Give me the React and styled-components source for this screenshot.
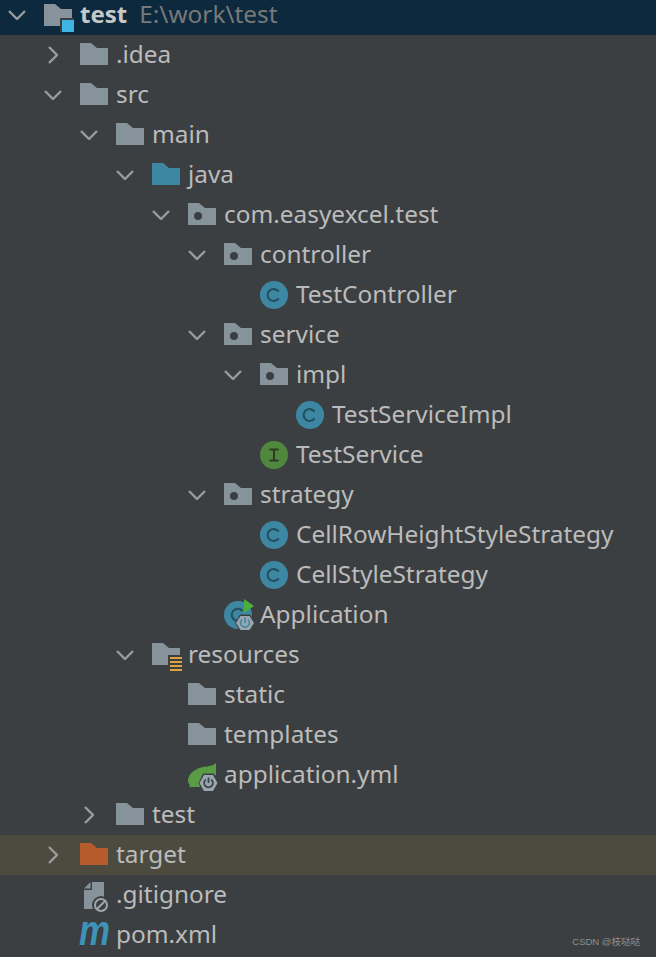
import React from "react";
import styled, { createGlobalStyle } from "styled-components";

const GlobalStyle = createGlobalStyle`
  html, body { margin: 0; padding: 0; background: #3c3f41; }
`;

const Tree = styled.div`
  position: relative;
  width: 656px;
  height: 957px;
  overflow: hidden;
  background: #3c3f41;
  color: #bbbbbb;
  font-family: "Noto Sans", "Open Sans", sans-serif;
  font-size: 24.4px;
`;

const Row = styled.div`
  display: flex;
  align-items: center;
  height: 40px;
  padding-left: ${(p) => p.$depth * 36}px;
  background: ${(p) => (p.$ignored ? "#4d4a40" : "transparent")};
  white-space: nowrap;
`;

const RootRow = styled(Row)`
  height: 29px;
  padding-bottom: 6px;
  background: #0d293e;
`;

const Arrow = styled.span`
  display: flex;
  align-items: center;
  justify-content: center;
  width: 34px;
  height: 28px;
  margin-right: 10px;
  flex: none;
`;

const IconBox = styled.span`
  display: flex;
  width: 28px;
  height: 28px;
  margin-right: 9px;
  flex: none;
  align-items: center;
  justify-content: flex-start;

  svg { display: block; overflow: visible; flex: none; }
`;

const FolderSvg = styled.svg`
  margin-bottom: 2px;
`;

const Label = styled.span`
  line-height: 24px;
  margin-top: -2px;
  margin-left: -1px;
`;

const RootName = styled(Label)`
  font-weight: 700;
  font-size: 24px;
  color: #c6c8ca;
`;

const RootPath = styled(Label)`
  margin-left: 12px;
  color: #787878;
`;

const Watermark = styled.div`
  position: absolute;
  right: 16px;
  bottom: 9px;
  font-family: "Liberation Sans", "Noto Sans CJK SC", sans-serif;
  font-size: 9.5px;
  color: #8d8f90;
`;

const FOLDER = "M0 0H11L17 5H28V22H0Z";
const BG = "#3c3f41";
const GREY = "#87939a";
const HEX_LIGHT = "#9aa7b0";

function Chevron({ open }) {
  return open ? (
    <svg width="18" height="10" viewBox="0 0 18 10">
      <path d="M1 1L9 9L17 1" fill="none" stroke="#9a9b9c" strokeWidth="2.4" />
    </svg>
  ) : (
    <svg width="10" height="18" viewBox="0 0 10 18">
      <path d="M1 1L9 9L1 17" fill="none" stroke="#9a9b9c" strokeWidth="2.4" />
    </svg>
  );
}

function Folder({ color = GREY }) {
  return (
    <FolderSvg width="28" height="22" viewBox="0 0 28 22">
      <path d={FOLDER} fill={color} />
    </FolderSvg>
  );
}

function PackageIcon() {
  return (
    <FolderSvg width="28" height="22" viewBox="0 0 28 22">
      <path d={FOLDER} fill={GREY} />
      <circle cx="10" cy="13" r="4" fill={BG} />
    </FolderSvg>
  );
}

function ModuleIcon() {
  return (
    <svg width="30" height="28" viewBox="0 0 30 28" style={{ marginTop: 6 }}>
      <path d={FOLDER} fill={GREY} />
      <rect x="16" y="14" width="14" height="14" fill={BG} />
      <rect x="18" y="16" width="12" height="12" fill="#3eb6e4" />
    </svg>
  );
}

function ResourcesIcon() {
  return (
    <svg width="30" height="24" viewBox="0 0 30 24">
      <path d={FOLDER} fill={GREY} />
      <rect x="16" y="12" width="14" height="16" fill={BG} />
      <g fill="#dfa33f">
        <rect x="18" y="14" width="12" height="2" />
        <rect x="18" y="18" width="12" height="2" />
        <rect x="18" y="22" width="12" height="2" />
        <rect x="18" y="26" width="12" height="2" />
      </g>
    </svg>
  );
}

function ClassIcon() {
  return (
    <svg width="28" height="28" viewBox="0 0 28 28">
      <circle cx="14" cy="14" r="14" fill="#3e87a3" />
      <path d="M18.6 10.6A6 6 0 1 0 18.6 17.4" fill="none" stroke="#22505f" strokeWidth="2.2" />
    </svg>
  );
}

function InterfaceIcon() {
  return (
    <svg width="28" height="28" viewBox="0 0 28 28">
      <circle cx="14" cy="14" r="14" fill="#4f873c" />
      <path d="M9.5 8.5H18.5M14 8.5V19.5M9.5 19.5H18.5" fill="none" stroke="#2e3a26" strokeWidth="2" />
    </svg>
  );
}

function BootIcon() {
  return (
    <svg width="32" height="32" viewBox="0 0 32 32">
      <circle cx="14" cy="16" r="14" fill="#3e87a3" />
      <path d="M18.4 12A6 6 0 1 0 16 21.5" fill="none" stroke="#22505f" strokeWidth="2.2" />
      <path d="M20 0L30 7L20 14Z" fill="#4dae3c" />
      <path d="M16 15.5H26L31 24L26 32.5H16L11 24Z" fill={BG} />
      <path d="M16.5 17H25.5L30 24L25.5 31H16.5L12 24Z" fill={HEX_LIGHT} />
      <path d="M18 20.5A4.4 4.4 0 1 0 24 20.5" fill="none" stroke="#3e87a3" strokeWidth="1.6" />
      <path d="M21 18.5V24" stroke="#3e87a3" strokeWidth="1.6" />
    </svg>
  );
}

function YamlIcon() {
  return (
    <svg width="30" height="24" viewBox="0 0 30 24">
      <path d="M28 0C25 4 15 3 9 6C3 9 0 13 0 18C0 20 1 21 2 22L1 24H12L28 12Z" fill="#5a9c43" />
      <path d="M15 10.5H26L30.5 20L26 29.5H15L10.5 20Z" fill={BG} />
      <path d="M16 12H25L29.5 20L25 28H16L11.5 20Z" fill={HEX_LIGHT} />
      <path d="M17.8 16.5A4.4 4.4 0 1 0 23.2 16.5" fill="none" stroke="#3c4446" strokeWidth="1.8" />
      <path d="M20.5 14.5V20" stroke="#3c4446" strokeWidth="1.8" />
    </svg>
  );
}

function IgnoredFileIcon() {
  return (
    <svg width="28" height="28" viewBox="0 0 28 28">
      <path d="M12 1H24V28H4V9H12Z" fill={GREY} />
      <path d="M10.5 1V7.5H4Z" fill={GREY} />
      <circle cx="21" cy="24" r="9" fill={BG} />
      <circle cx="21" cy="24" r="6" fill="none" stroke={HEX_LIGHT} strokeWidth="2" />
      <path d="M17 28L25 20" stroke={HEX_LIGHT} strokeWidth="2" />
    </svg>
  );
}

function MavenIcon() {
  return (
    <svg width="32" height="28" viewBox="0 0 32 28">
      <text
        x="-1"
        y="24"
        fontFamily="Liberation Sans, sans-serif"
        fontWeight="700"
        fontStyle="italic"
        fontSize="42"
        textLength="31"
        lengthAdjust="spacingAndGlyphs"
        fill="#3d93b8"
      >
        m
      </text>
    </svg>
  );
}

const rows = [
  { depth: 1, arrow: "right", icon: <Folder />, name: ".idea" },
  { depth: 1, arrow: "down", icon: <Folder />, name: "src" },
  { depth: 2, arrow: "down", icon: <Folder />, name: "main" },
  { depth: 3, arrow: "down", icon: <Folder color="#3e87a3" />, name: "java" },
  { depth: 4, arrow: "down", icon: <PackageIcon />, name: "com.easyexcel.test" },
  { depth: 5, arrow: "down", icon: <PackageIcon />, name: "controller" },
  { depth: 6, icon: <ClassIcon />, name: "TestController" },
  { depth: 5, arrow: "down", icon: <PackageIcon />, name: "service" },
  { depth: 6, arrow: "down", icon: <PackageIcon />, name: "impl" },
  { depth: 7, icon: <ClassIcon />, name: "TestServiceImpl" },
  { depth: 6, icon: <InterfaceIcon />, name: "TestService" },
  { depth: 5, arrow: "down", icon: <PackageIcon />, name: "strategy" },
  { depth: 6, icon: <ClassIcon />, name: "CellRowHeightStyleStrategy" },
  { depth: 6, icon: <ClassIcon />, name: "CellStyleStrategy" },
  { depth: 5, icon: <BootIcon />, name: "Application" },
  { depth: 3, arrow: "down", icon: <ResourcesIcon />, name: "resources" },
  { depth: 4, icon: <Folder />, name: "static" },
  { depth: 4, icon: <Folder />, name: "templates" },
  { depth: 4, icon: <YamlIcon />, name: "application.yml" },
  { depth: 2, arrow: "right", icon: <Folder />, name: "test" },
  { depth: 1, arrow: "right", icon: <Folder color="#b65b2c" />, name: "target", ignored: true },
  { depth: 1, icon: <IgnoredFileIcon />, name: ".gitignore" },
  { depth: 1, icon: <MavenIcon />, name: "pom.xml" },
];

export default function App() {
  return (
    <Tree>
      <GlobalStyle />
      <RootRow $depth={0}>
        <Arrow>
          <Chevron open />
        </Arrow>
        <IconBox>
          <ModuleIcon />
        </IconBox>
        <RootName>test</RootName>
        <RootPath>E:\work\test</RootPath>
      </RootRow>
      {rows.map((r) => (
        <Row key={r.name + r.depth} $depth={r.depth} $ignored={r.ignored}>
          <Arrow>{r.arrow && <Chevron open={r.arrow === "down"} />}</Arrow>
          <IconBox>{r.icon}</IconBox>
          <Label>{r.name}</Label>
        </Row>
      ))}
      <Watermark>CSDN @枝哒哒</Watermark>
    </Tree>
  );
}
